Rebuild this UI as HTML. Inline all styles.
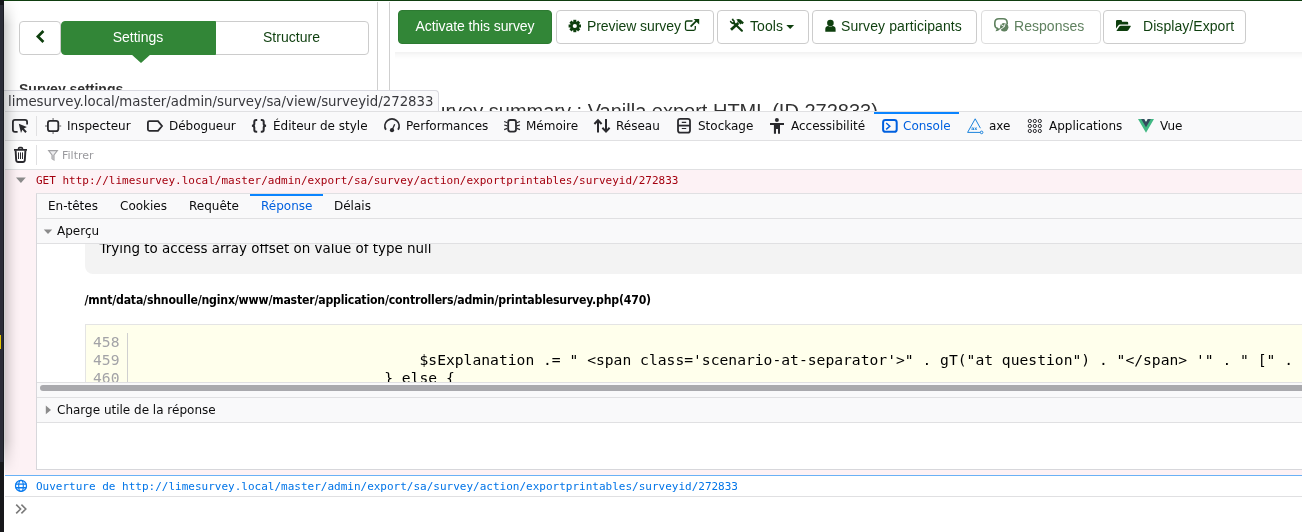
<!DOCTYPE html>
<html><head><meta charset="utf-8"><title>devtools</title>
<style>
*{box-sizing:border-box;margin:0;padding:0}
html,body{width:1302px;height:532px;overflow:hidden;background:#fff}
body{position:relative;font-family:"Liberation Sans",sans-serif;font-size:14px;color:#0e3f0e}
.abs{position:absolute}
svg{position:absolute;overflow:visible}
#topline{left:4px;top:0;width:1298px;height:1px;background:#0f3e10}
#topline2{left:0;top:0;width:4px;height:5px;background:#15171b}
#leftstrip{left:0;top:0;width:4px;height:532px;background:linear-gradient(to right,#2a2c37 0,#2a2c37 2.8px,#1b1d23 3.2px)}
#handleL{left:377px;top:2px;width:1px;height:111px;background:#cfcfcf}
#handleR{left:389px;top:2px;width:1px;height:111px;background:#cfcfcf}
.btn{position:absolute;top:10px;height:34px;border:1px solid #ccc;border-radius:4px;background:#fff;color:#0e3f0e;font-size:14px;line-height:30px;white-space:nowrap;letter-spacing:-0.08px}
.btn span{position:absolute;top:0}
#bar-shadow{left:395px;top:51.5px;width:907px;height:7px;background:linear-gradient(to bottom,rgba(0,0,0,.05),rgba(0,0,0,.02) 50%,rgba(0,0,0,0))}
#dt{left:5px;top:111px;width:1297px;height:421px;background:#fff;font-family:"DejaVu Sans",sans-serif;font-size:12px;color:#0c0c0d}
#dt .tb{position:absolute;left:0;top:0;width:1297px;height:30px;background:#f9f9fa;border-top:1px solid #e0e0e2;border-bottom:1px solid #e0e0e2}
#dt .t{position:absolute;white-space:nowrap;line-height:14px}
.mono{font-family:"DejaVu Sans Mono",monospace;font-size:11px}
#filterrow{position:absolute;left:0;top:30px;width:1297px;height:29px;background:#fff;border-bottom:1px solid #e0e0e2}
#errrow{position:absolute;left:0;top:59px;width:1297px;height:305px;background:#fdf2f5}
#np{position:absolute;left:31px;top:82px;width:1266px;height:277px;background:#fff;border-left:1px solid #d7d7db;border-top:1px solid #e0e0e2;border-bottom:1px solid #d7d7db;overflow:hidden}
#np .row{position:absolute;left:0;width:1266px;background:#f9f9fa;border-bottom:1px solid #e0e0e2}
#inforow{position:absolute;left:0;top:364px;width:1297px;height:22px;background:#fff;border-top:1px solid #6ab1f5;border-bottom:1px solid #e0e0e2}
.sep{position:absolute;width:1px;background:#e0e0e2}
</style></head><body><div id="root" style="position:absolute;left:0;top:0;width:1302px;height:532px;overflow:hidden;will-change:transform">

<!-- sidebar -->
<div class="btn" style="left:19px;top:21px;width:42px"></div>
<svg style="left:19px;top:21px" width="42" height="34" viewBox="19 21 42 34"><path d="M43.4 31 L37.9 36.5 L43.4 42" fill="none" stroke="#0e3f0e" stroke-width="2.7"/></svg>
<div class="btn" style="left:61px;top:21px;width:155px;background:#328637;border-color:#328637;color:#fff;border-radius:4px 0 0 4px;text-align:center;letter-spacing:0;z-index:2;padding-right:1px">Settings</div>
<div class="btn" style="left:215px;top:21px;width:154px;border-radius:0 4px 4px 0;text-align:center;letter-spacing:0.02px;padding-right:1px">Structure</div>
<div class="abs" style="left:131px;top:54px;width:0;height:0;border-left:10px solid transparent;border-right:10px solid transparent;border-top:9px solid #328637"></div>
<div class="abs" style="left:19px;top:81px;font-weight:bold;font-size:14px;color:#333">Survey settings</div>
<div class="abs" id="handleL"></div><div class="abs" id="handleR"></div>

<!-- topbar -->
<div class="btn" style="left:398px;width:154px;background:#328637;border-color:#2d7a32;color:#fff;text-align:center">Activate this survey</div>
<div class="btn" style="left:556px;width:158px"><span style="left:30px">Preview survey</span></div>
<div class="btn" style="left:717px;width:92px"><span style="left:32px;letter-spacing:0.1px">Tools</span></div>
<div class="btn" style="left:812px;width:165px"><span style="left:28px;letter-spacing:0.1px">Survey participants</span></div>
<div class="btn" style="left:981px;width:120px;border-color:#ddd;color:#5f815f"><span style="left:32px;letter-spacing:0.04px">Responses</span></div>
<div class="btn" style="left:1103px;width:143px"><span style="left:39px;letter-spacing:0.06px">Display/Export</span></div>
<div class="abs" id="bar-shadow"></div>
<div class="abs" style="left:421px;top:100px;font-size:20px;color:#333;white-space:nowrap">Survey summary : Vanilla export HTML (ID 272833)</div>

<!-- page icons (page coords) -->
<svg style="left:0;top:0" width="1302" height="60" viewBox="0 0 1302 60" fill="#0e3f0e">
 <!-- gear -->
 <g transform="translate(574.8 26)">
  <g fill="#0e3f0e">
   <rect x="-1.5" y="-6.2" width="3" height="12.4"/>
   <rect x="-1.5" y="-6.2" width="3" height="12.4" transform="rotate(45)"/>
   <rect x="-1.5" y="-6.2" width="3" height="12.4" transform="rotate(90)"/>
   <rect x="-1.5" y="-6.2" width="3" height="12.4" transform="rotate(135)"/>
   <circle r="4.6"/>
  </g>
  <circle r="2.1" fill="#fff"/>
 </g>
 <!-- external link -->
 <path d="M692.5 21 H687 Q685.5 21 685.5 22.5 V28.8 Q685.5 30.3 687 30.3 H693.8 Q695.3 30.3 695.3 28.8 V26" fill="none" stroke="#0e3f0e" stroke-width="1.3"/>
 <path d="M690.6 26.6 L697.4 19.8" stroke="#0e3f0e" stroke-width="1.8" fill="none"/>
 <path d="M693.6 19 H699.2 V24.6 Z"/>
 <!-- tools -->
 <g stroke="#0e3f0e" fill="none">
  <path d="M731 29.7 L738.4 22.9" stroke-width="2.7"/>
  <path d="M741.9 30.7 L733.9 22.9" stroke-width="2.1" stroke-linecap="round"/>
  <path d="M732.4 18.8 Q732.8 20.4 734 21 Q734.8 22.6 733.4 23.4 Q732 23.6 731.2 22.2 Q730.6 21.5 730 21.7" stroke-width="1.6"/>
 </g>
 <path d="M736.2 19.5 Q739.8 17.8 742.2 20.9 L743.9 22.5 L742.5 24.3 L741.6 23.5 L740.5 24.5 L737.5 21.5 Q737.6 20.1 736.2 19.5 Z"/>
 <!-- caret -->
 <path d="M786.3 25 H794.1 L790.2 29.1 Z"/>
 <!-- user -->
 <circle cx="830.4" cy="23.1" r="3.3"/>
 <path d="M825.3 31.7 V29.2 Q825.3 26.2 828.2 26 Q830.4 27.4 832.6 26 Q835.6 26.2 835.6 29.2 V31.7 Z"/>
 <!-- responses -->
 <g stroke="#5f815f" fill="none">
  <path d="M999.6 28.4 Q998.6 30 997 30.2 Q997.6 29.2 997.4 28.4 Q994.8 27.8 994.8 24.6 V23 Q994.8 18.8 999 18.8 H1003 Q1007.2 18.8 1007.2 23 V24.2" stroke-width="1.6"/>
 </g>
 <circle cx="1004.2" cy="27.2" r="4.2" fill="#5f815f"/>
 <path d="M1000.2 29.6 L1004.4 26.6 L1005.2 23.2 M1004.4 26.6 L1001.2 24.6" stroke="#fff" stroke-width="0.9" fill="none"/>
 <!-- folder open -->
 <path d="M1116 28.5 V21.2 Q1116 20 1117.2 20 H1120.8 Q1122 20 1122 21.2 V21.8 H1127 Q1128.2 21.8 1128.2 23 V24.6 H1120 Q1118.9 24.6 1118.3 25.6 Z"/>
 <path d="M1116.4 31 L1119.3 26.6 Q1119.8 25.8 1120.8 25.8 H1130.4 Q1131.2 25.8 1130.7 26.6 L1128.3 30.2 Q1127.8 31 1126.8 31 Z"/>
</svg>

<div class="abs" id="dt">
<div class="tb"></div>
<div class="sep" style="left:31px;top:5px;height:20px"></div>
<span class="t" style="left:62px;top:8px">Inspecteur</span>
<span class="t" style="left:164px;top:8px">Débogueur</span>
<span class="t" style="left:268px;top:8px">Éditeur de style</span>
<span class="t" style="left:401px;top:8px">Performances</span>
<span class="t" style="left:521px;top:8px">Mémoire</span>
<span class="t" style="left:611px;top:8px">Réseau</span>
<span class="t" style="left:693px;top:8px">Stockage</span>
<span class="t" style="left:786px;top:8px">Accessibilité</span>
<div class="abs" style="left:869px;top:1px;width:85px;height:2px;background:#0a84ff"></div>
<span class="t" style="left:898px;top:8px;color:#0060df">Console</span>
<span class="t" style="left:984px;top:8px">axe</span>
<span class="t" style="left:1044px;top:8px">Applications</span>
<span class="t" style="left:1155px;top:8px">Vue</span>

<div id="filterrow"></div>
<div class="sep" style="left:31px;top:34px;height:20px"></div>
<span class="t" style="left:57px;top:38px;color:#9a9a9e;font-size:11px">Filtrer</span>

<div id="errrow"></div>
<span class="t mono" style="left:31px;top:63px;color:#a4000f">GET http://limesurvey.local/master/admin/export/sa/survey/action/exportprintables/surveyid/272833</span>

<div id="np">
 <div class="row" style="top:0;height:25px"></div>
 <div class="abs" style="left:213px;top:0;width:73px;height:2px;background:#0a84ff"></div>
 <span class="t" style="left:11px;top:5px">En-têtes</span>
 <span class="t" style="left:83px;top:5px">Cookies</span>
 <span class="t" style="left:152px;top:5px">Requête</span>
 <span class="t" style="left:224px;top:5px;color:#0060df">Réponse</span>
 <span class="t" style="left:297px;top:5px">Délais</span>
 <div class="row" style="top:25px;height:25px"></div>
 <span class="t" style="left:20px;top:30px">Aperçu</span>
 <div class="abs" id="prev" style="left:0;top:50px;width:1266px;height:138px;background:#fff;overflow:hidden">
   <div class="abs" style="left:48px;top:-20px;width:1300px;height:50px;background:#f3f3f3;border-radius:8px"></div>
   <span class="t" style="left:62.6px;top:-3.5px;font-size:13.45px;line-height:16px;color:#000">Trying to access array offset on value of type null</span>
   <span class="t" style="left:47.5px;top:49px;font-family:'DejaVu Sans Condensed','DejaVu Sans',sans-serif;font-weight:bold;font-size:12.2px;letter-spacing:-0.2px;color:#000">/mnt/data/shnoulle/nginx/www/master/application/controllers/admin/printablesurvey.php(470)</span>
   <div class="abs" style="left:48px;top:80px;width:1300px;height:80px;background:#ffffec;border:1px solid #e4e4e4"></div>
   <div class="abs" style="left:90px;top:89px;width:1px;height:80px;background:#d0d0d0"></div>
   <pre class="abs" style="left:56px;top:89px;font-family:'DejaVu Sans Mono',monospace;font-size:14.667px;line-height:18px;color:#000"><span style="color:#a3a3a7">458</span>
<span style="color:#a3a3a7">459</span>                                  $sExplanation .= " &lt;span class='scenario-at-separator'&gt;" . gT("at question") . "&lt;/span&gt; '" . " [" . 
<span style="color:#a3a3a7">460</span>                              } else {</pre>
 </div>
 <div class="abs" style="left:0;top:188px;width:1266px;height:16px;background:#f9f9fa;border-top:1px solid #e0e0e2;border-bottom:1px solid #e0e0e2"></div>
 <div class="abs" style="left:3px;top:191px;width:1290px;height:6px;border-radius:3px;background:#a9a9ad"></div>
 <div class="row" style="top:204px;height:25px"></div>
 <span class="t" style="left:20px;top:209px">Charge utile de la réponse</span>
</div>

<div id="inforow"></div>
<span class="t mono" style="left:31px;top:369px;color:#0074e8">Ouverture de http://limesurvey.local/master/admin/export/sa/survey/action/exportprintables/surveyid/272833</span>
</div>
<!-- status tooltip -->
<div class="abs" style="left:4px;top:90px;width:435px;height:21px;background:#f9f9fb;border-top:1px solid #d9d9e0;border-right:1px solid #d9d9e0;border-radius:0 4px 0 0"></div>
<span class="abs" style="left:8px;top:94px;font-family:'DejaVu Sans',sans-serif;font-size:13.33px;line-height:16px;color:#38383d;white-space:nowrap">limesurvey.local/master/admin/survey/sa/view/surveyid/272833</span>

<svg style="left:0;top:0" width="1302" height="532" viewBox="0 0 1302 532" fill="none" stroke="#2a2a2e" stroke-width="1.8">
 <!-- picker -->
 <path d="M17.6 131.9 H15 Q12.9 131.9 12.9 129.8 V122 Q12.9 119.9 15 119.9 H25 Q27.1 119.9 27.1 122 V124.6"/>
 <path d="M18.8 123.8 L26.9 127 L23.9 128.4 L26.8 131.5 L25.3 132.9 L22.4 129.8 L21 133 Z" fill="#2a2a2e" stroke="none"/>
 <!-- inspector -->
 <rect x="47.9" y="120.8" width="10.4" height="10.4" rx="2.2"/>
 <path d="M53.1 118 V120 M53.1 132 V134 M45 126 H47 M59.2 126 H61.2" stroke="#8e8e90" stroke-width="1.4"/>
 <!-- debugger -->
 <path d="M149.4 121.1 H158 L162 125.95 L158 130.8 H149.4 Q147.9 130.8 147.9 129.3 V122.6 Q147.9 121.1 149.4 121.1 Z"/>
 <!-- braces -->
 <path d="M257.2 119.9 H256.2 Q254.3 119.9 254.3 121.8 V124 Q254.3 125.8 251.9 125.8 Q254.3 125.8 254.3 127.6 V129.8 Q254.3 131.7 256.2 131.7 H257.2" stroke-width="2"/>
 <path d="M260.8 119.9 H261.8 Q263.7 119.9 263.7 121.8 V124 Q263.7 125.8 266.1 125.8 Q263.7 125.8 263.7 127.6 V129.8 Q263.7 131.7 261.8 131.7 H260.8" stroke-width="2"/>
 <!-- performance -->
 <path d="M385.9 129.7 A7.1 7.1 0 1 1 398.1 129.7"/>
 <circle cx="392" cy="130.2" r="2.1" fill="#2a2a2e" stroke="none"/>
 <path d="M392 130.2 L394.7 124.2" stroke-width="1.3"/>
 <!-- memory -->
 <rect x="508.2" y="120" width="7.8" height="11.6" rx="2"/>
 <path d="M504.2 121.5 L507.4 122.8 M504.2 125 L507.4 125.8 M504.2 129.6 L507.4 128.4 M520 121.5 L516.8 122.8 M520 125 L516.8 125.8 M520 129.6 L516.8 128.4" stroke-width="1.2"/>
 <!-- network -->
 <path d="M598 132.6 V120.4 M594.4 124 L598 120.2 L601.6 124 M606 119 V131.4 M602.4 127.8 L606 131.6 L609.6 127.8" stroke-width="2"/>
 <!-- storage -->
 <rect x="678" y="118.9" width="12" height="13.8" rx="2.2"/>
 <path d="M678 125.6 H690" />
 <path d="M681.8 122.4 H686.2 M681.8 128.5 H686.2" stroke-width="1.2"/>
 <!-- accessibility -->
 <g fill="#2a2a2e" stroke="none">
  <circle cx="776.9" cy="119.9" r="2"/>
  <path d="M770 123 H784 V125 H780 V133.7 H778 V129 H776 V133.7 H773.9 V125 H770 Z"/>
 </g>
 <!-- console -->
 <g stroke="#0060df">
  <rect x="883.1" y="120" width="13.6" height="11.8" rx="2.4" stroke-width="2"/>
  <path d="M886.2 123 L889.8 126.2 L886.2 129.4" stroke-width="1.5"/>
 </g>
 <!-- axe -->
 <g stroke="#1a82dc" stroke-width="1">
  <path d="M980.4 128.2 L975.2 118.8 L967.6 132.4 H980.2"/>
  <circle cx="981.6" cy="132.4" r="1.3"/>
 </g>
 <!-- apps -->
 <g stroke-width="1">
  <circle cx="1029.8" cy="121" r="1.6"/><circle cx="1034.8" cy="121" r="1.6"/><circle cx="1039.8" cy="121" r="1.6"/>
  <circle cx="1029.8" cy="126" r="1.6"/><circle cx="1034.8" cy="126" r="1.6"/><circle cx="1039.8" cy="126" r="1.6"/>
  <circle cx="1029.8" cy="131" r="1.6"/><circle cx="1034.8" cy="131" r="1.6"/><circle cx="1039.8" cy="131" r="1.6"/>
 </g>
 <!-- vue -->
 <g stroke="none" transform="translate(1138 119) scale(0.0625)">
  <path d="M204.8 0H256L128 220.8 0 0h97.92L128 51.2 157.44 0h47.36z" fill="#41b883"/>
  <path d="M50.56 0L128 133.12 204.8 0h-47.36L128 51.2 97.92 0H50.56z" fill="#35495e"/>
 </g>
 <!-- trash -->
 <path d="M14 149.9 H27 M18.6 149.6 V148.6 Q18.6 147.6 19.6 147.6 H21.4 Q22.4 147.6 22.4 148.6 V149.6" stroke-width="1.6"/>
 <path d="M15.6 150.4 L16.2 160.4 Q16.3 162 17.9 162 H23.1 Q24.7 162 24.8 160.4 L25.4 150.4" stroke-width="1.9"/>
 <path d="M18.5 152.4 V159 M20.5 152.4 V159 M22.5 152.4 V159" stroke-width="1"/>
 <!-- filter -->
 <path d="M48.6 150.6 H57.4 L54 155 V160 L52 158.6 V155 Z" stroke="#a3a3a6" stroke-width="1.1" fill="#ededef"/><path d="M52 155 H54 V160 L52 158.6 Z" fill="#b9b9bc" stroke="none"/>
 <!-- twisties -->
 <path d="M16 177.4 H25.8 L20.9 183 Z" fill="#8b8b8b" stroke="none"/>
 <path d="M43.8 229.4 H52.2 L48 234 Z" fill="#8b8b8b" stroke="none"/>
 <path d="M45.8 405.6 V414.2 L51 409.9 Z" fill="#8b8b8b" stroke="none"/>
 <!-- globe -->
 <g stroke="#0a7bef" stroke-width="1.3">
  <circle cx="21" cy="485.9" r="5.5"/>
  <ellipse cx="21" cy="485.9" rx="2.3" ry="5.5" stroke-width="1.1"/>
  <path d="M15.6 484.1 H26.4 M15.6 487.7 H26.4" stroke-width="1.4"/>
 </g>
 <!-- prompt -->
 <path d="M16.2 504.6 L20.6 509 L16.2 513.4 M21.4 504.6 L25.8 509 L21.4 513.4" stroke="#7a7a7a" stroke-width="1.6"/>
</svg>
<span class="abs" style="left:971.2px;top:126px;font-family:'DejaVu Sans',sans-serif;font-size:4.6px;line-height:5px;font-weight:bold;color:#1a82dc">ax</span>

<div class="abs" id="leftstrip"></div>
<div class="abs" style="left:4px;top:1px;width:16px;height:476px;background:linear-gradient(to right,rgba(0,0,0,.19),rgba(0,0,0,.12) 25%,rgba(0,0,0,.06) 50%,rgba(0,0,0,.02) 75%,rgba(0,0,0,0));-webkit-mask-image:linear-gradient(to bottom,rgba(0,0,0,.15) 0,#000 24px,#000 440px,transparent 474px);mask-image:linear-gradient(to bottom,rgba(0,0,0,.15) 0,#000 24px,#000 440px,transparent 474px)"></div>
<div class="abs" style="left:0;top:462px;width:4px;height:70px;background:#17181b"></div>
<div class="abs" style="left:0;top:335px;width:1px;height:14px;background:#e6c700"></div>
<div class="abs" id="topline"></div><div class="abs" id="topline2"></div>
</div></body></html>
